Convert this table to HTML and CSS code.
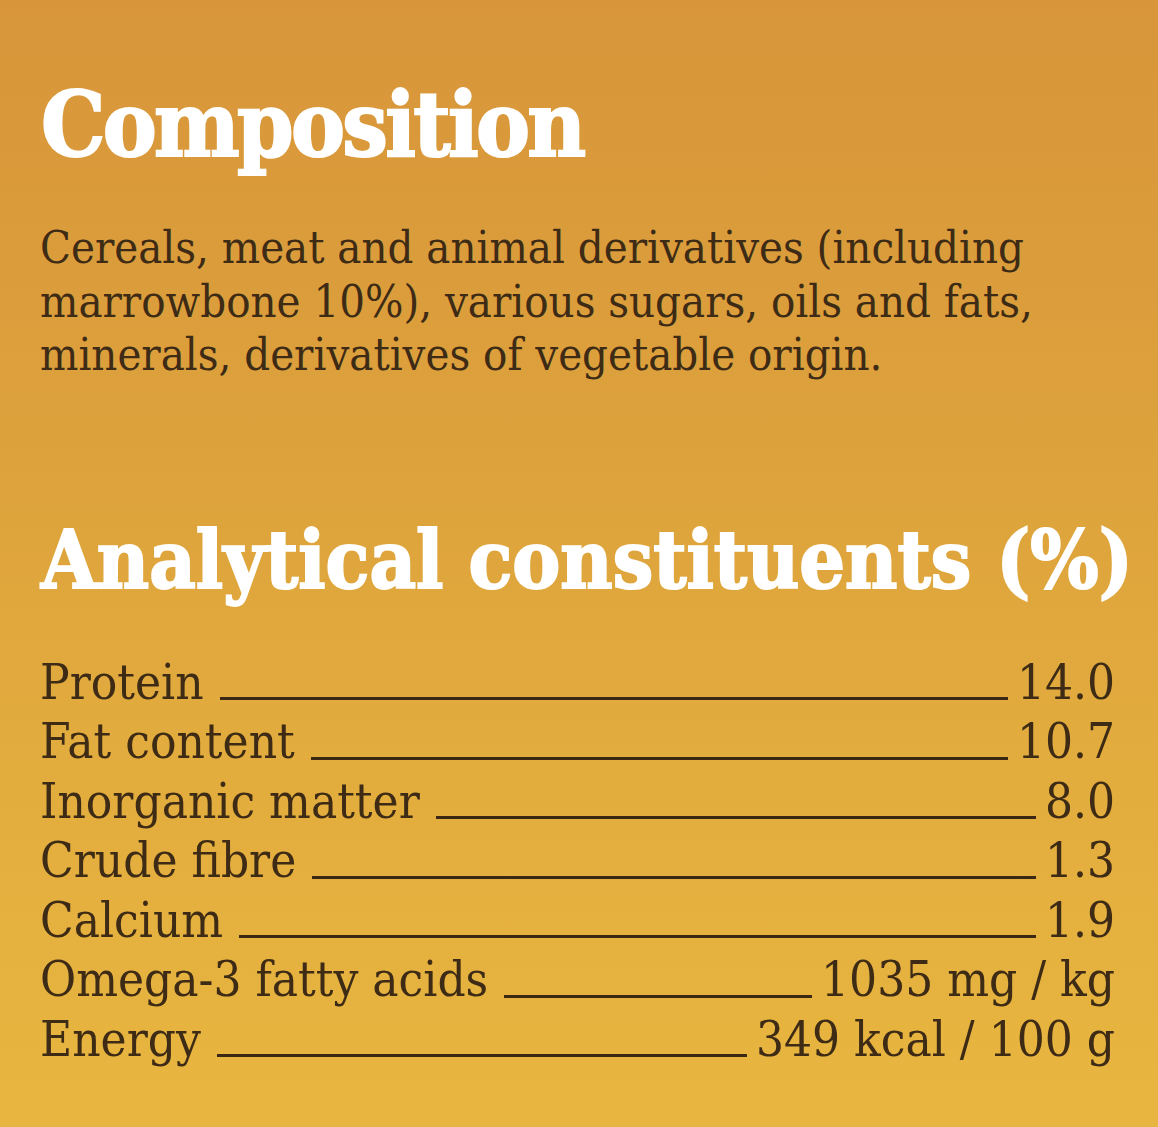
FILE: index.html
```html
<!DOCTYPE html>
<html lang="en">
<head>
<meta charset="utf-8">
<title>Composition</title>
<link rel="stylesheet" href="styles.css">
</head>
<body>
<main class="panel">
  <section class="composition">
    <h1 class="title title-lg">Composition</h1>
    <p class="ingredients">Cereals, meat and animal derivatives (including marrowbone 10%), various sugars, oils and fats, minerals, derivatives of vegetable origin.</p>
  </section>
  <section class="analysis">
    <h2 class="title title-md">Analytical constituents (%)</h2>
    <ul class="rows">
      <li class="row"><span class="label">Protein</span><span class="leader"></span><span class="value">14.0</span></li>
      <li class="row"><span class="label">Fat content</span><span class="leader"></span><span class="value">10.7</span></li>
      <li class="row"><span class="label">Inorganic matter</span><span class="leader"></span><span class="value">8.0</span></li>
      <li class="row"><span class="label">Crude fibre</span><span class="leader"></span><span class="value">1.3</span></li>
      <li class="row"><span class="label">Calcium</span><span class="leader"></span><span class="value">1.9</span></li>
      <li class="row"><span class="label">Omega-3 fatty acids</span><span class="leader"></span><span class="value">1035 mg / kg</span></li>
      <li class="row"><span class="label">Energy</span><span class="leader"></span><span class="value">349 kcal / 100 g</span></li>
    </ul>
  </section>
</main>
</body>
</html>
```
FILE: styles.css
```css
html, body {
  margin: 0;
  padding: 0;
}

body {
  min-height: 1127px;
  background: linear-gradient(180deg, #d8953a 0%, #dda23c 40%, #e3ad3e 70%, #e8b640 100%);
  font-family: "DejaVu Serif", "Liberation Serif", serif;
  color: #3d2b15;
}

.panel {
  padding: 79px 43px 0 41px;
}

.title {
  margin: 0;
  color: #ffffff;
  font-weight: bold;
  font-stretch: condensed;
  line-height: 1;
  white-space: nowrap;
  -webkit-text-stroke: 2px #ffffff;
}

.title-lg {
  font-size: 90px;
  letter-spacing: -2.7px;
}

.title-md {
  font-size: 80px;
  letter-spacing: 0;
}

.ingredients {
  margin: 52px 0 0 -1px;
  font-size: 45px;
  font-stretch: condensed;
  line-height: 53.5px;
}

.analysis {
  margin-top: 138px;
}

.rows {
  list-style: none;
  margin: 53px 0 0 -1px;
  padding: 0;
}

.row {
  display: flex;
  height: 59.5px;
  font-size: 49px;
  font-stretch: condensed;
  line-height: 59.5px;
  white-space: nowrap;
}

.leader {
  flex: 1 1 auto;
  align-self: flex-end;
  height: 0;
  margin: 0 9px 12px 16px;
  border-bottom: 3px solid #3a2812;
}

.value {
  text-align: right;
}
```
